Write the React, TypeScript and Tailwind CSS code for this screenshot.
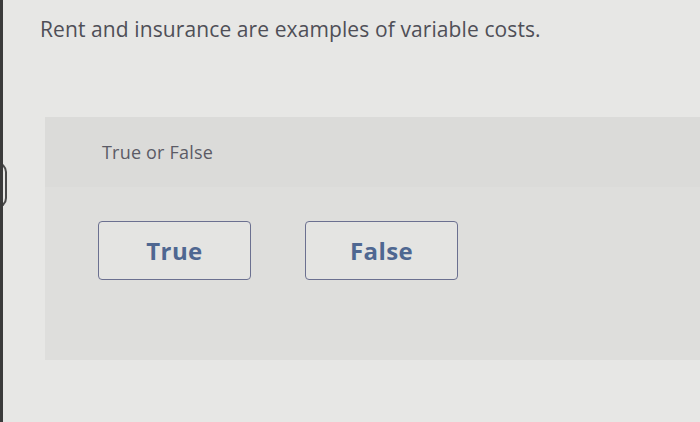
export default function App() {
  return (
    <div
      className="relative h-[422px] w-[700px] overflow-hidden border-l-[3px] border-[#3b3b3b] bg-[#e7e7e5]"
      style={{ fontFamily: "'Open Sans', Lato, sans-serif" }}
    >
      {/* bezel shapes at the left edge */}
      <div className="absolute left-[-6px] top-[162px] h-[46px] w-[10px] rounded-r-full border-2 border-[#4a4a4a]" />

      <div className="pl-[37px] pt-[15px]">
        <h1 className="text-[21px] leading-[29px] tracking-[0.1px] text-[#4f4f57]">
          Rent and insurance are examples of variable costs.
        </h1>
      </div>

      <div className="ml-[42px] mt-[73px] h-[243px] bg-[#dededc]">
        <div className="flex h-[70px] items-center bg-[#dbdbd9] pl-[57px]">
          <span className="text-[18px] tracking-[0.2px] text-[#5b5b66]">True or False</span>
        </div>
        <div className="flex gap-[54px] pl-[53px] pt-[34px]">
          <button className="flex h-[59px] w-[153px] items-center justify-center rounded-[4px] border-[1.5px] border-[#6b7090] bg-[#e4e4e2] text-[24px] font-bold tracking-[0.4px] text-[#4f6791]">
            True
          </button>
          <button className="flex h-[59px] w-[153px] items-center justify-center rounded-[4px] border-[1.5px] border-[#6b7090] bg-[#e4e4e2] text-[24px] font-bold tracking-[0.4px] text-[#4f6791]">
            False
          </button>
        </div>
      </div>
    </div>
  );
}
